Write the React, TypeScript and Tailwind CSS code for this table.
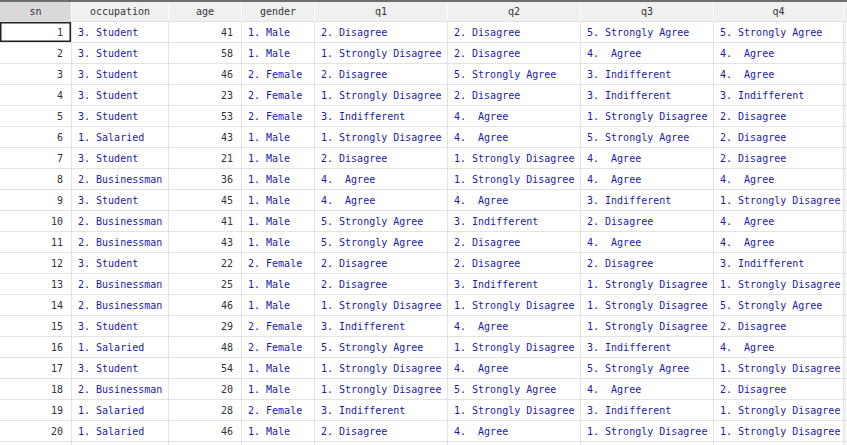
import React from "react";

const cols = [
  { key: "sn", w: "w-[72px]", align: "right" },
  { key: "occupation", w: "w-[97px]", align: "left" },
  { key: "age", w: "w-[73px]", align: "right" },
  { key: "gender", w: "w-[73px]", align: "left" },
  { key: "q1", w: "w-[133px]", align: "left" },
  { key: "q2", w: "w-[133px]", align: "left" },
  { key: "q3", w: "w-[133px]", align: "left" },
  { key: "q4", w: "w-[130px]", align: "left" },
];

const SD = "1. Strongly Disagree";
const D = "2. Disagree";
const I = "3. Indifferent";
const A = "4.  Agree";
const SA = "5. Strongly Agree";
const ST = "3. Student";
const SAL = "1. Salaried";
const B = "2. Businessman";
const M = "1. Male";
const F = "2. Female";

const rows: (string | number)[][] = [
  [1, ST, 41, M, D, D, SA, SA],
  [2, ST, 58, M, SD, D, A, A],
  [3, ST, 46, F, D, SA, I, A],
  [4, ST, 23, F, SD, D, I, I],
  [5, ST, 53, F, I, A, SD, D],
  [6, SAL, 43, M, SD, A, SA, D],
  [7, ST, 21, M, D, SD, A, D],
  [8, B, 36, M, A, SD, A, A],
  [9, ST, 45, M, A, A, I, SD],
  [10, B, 41, M, SA, I, D, A],
  [11, B, 43, M, SA, D, A, A],
  [12, ST, 22, F, D, D, D, I],
  [13, B, 25, M, D, I, SD, SD],
  [14, B, 46, M, SD, SD, SD, SA],
  [15, ST, 29, F, I, A, SD, D],
  [16, SAL, 48, F, SA, SD, I, A],
  [17, ST, 54, M, SD, A, SA, SD],
  [18, B, 20, M, SD, SA, A, D],
  [19, SAL, 28, F, I, SD, I, SD],
  [20, SAL, 46, M, D, A, SD, SD],
  ["", "", "", "", "", "", "", ""],
];

export default function App() {
  return (
    <div
      className="w-[847px] h-[445px] overflow-hidden bg-white text-[10px] leading-none"
      style={{ fontFamily: '"DejaVu Sans Mono", "Liberation Mono", monospace' }}
    >
      <div className="h-[2px] bg-[#6e6e6e]" />
      <div className="flex h-[20px] bg-[#f0f0f0] border-b border-[#e2e2e2]">
        {cols.map((c, i) => (
          <div
            key={c.key}
            className={`${c.w} shrink-0 h-full flex items-center justify-center border-r border-[#fbfbfb] text-[#333] ${
              i === 0 ? "bg-[#d9d9d9]" : ""
            }`}
          >
            {c.key}
          </div>
        ))}
        <div className="flex-1" />
      </div>
      {rows.map((r, ri) => (
        <div key={ri} className="flex h-[21px] border-b border-[#e3e3e3]">
          {cols.map((c, ci) => {
            const v = r[ci];
            const isNum = typeof v === "number";
            const selected = ri === 0 && ci === 0;
            return (
              <div
                key={c.key}
                className={`${c.w} shrink-0 h-full flex items-center pt-px border-r border-[#e3e3e3] whitespace-pre ${
                  c.align === "right" ? "justify-end pr-[8px]" : "justify-start pl-[6px]"
                } ${isNum ? "text-[#333]" : "text-[#1a1aa8]"} ${
                  selected ? "ring-[1.5px] ring-inset ring-[#222]" : ""
                }`}
              >
                {String(v)}
              </div>
            );
          })}
          <div className="flex-1 bg-[#f4f4f4]" />
        </div>
      ))}
    </div>
  );
}
